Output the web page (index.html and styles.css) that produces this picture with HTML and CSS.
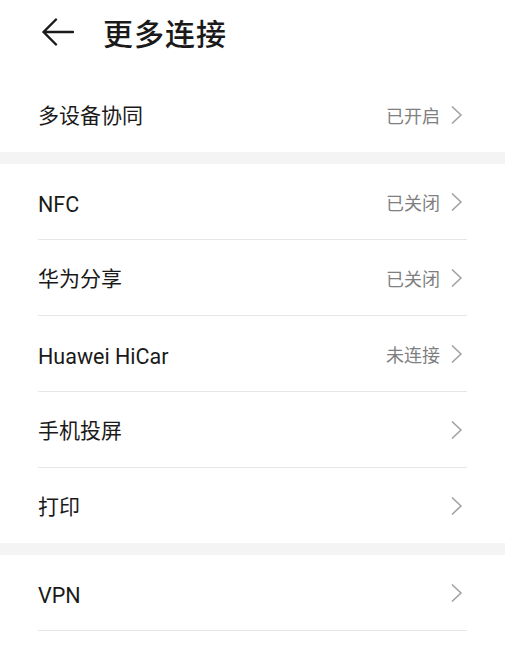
FILE: index.html
```html
<!DOCTYPE html>
<html lang="zh-CN">
<head>
<meta charset="utf-8">
<title>更多连接</title>
<link rel="stylesheet" href="styles.css">
</head>
<body>
<header class="topbar">
  <svg class="back" viewBox="0 0 32 28" width="32" height="28" aria-hidden="true">
    <path d="M31 14 H1.5 M14 1.5 L1.5 14 L14 26.5" fill="none" stroke="#1a1a1a" stroke-width="2.4" stroke-linecap="round" stroke-linejoin="round"/>
  </svg>
  <h1 class="title">更多连接</h1>
</header>

<section class="group">
  <div class="row"><div class="row-inner last">
    <span class="label">多设备协同</span>
    <span class="value">已开启</span>
    <svg class="chev" viewBox="0 0 12 18" width="12" height="18"><path d="M1.5 1 L10 9 L1.5 17" fill="none" stroke="#a3a3a3" stroke-width="1.7" stroke-linecap="round" stroke-linejoin="round"/></svg>
  </div></div>
</section>

<div class="band"></div>

<section class="group">
  <div class="row"><div class="row-inner">
    <span class="label latin">NFC</span>
    <span class="value">已关闭</span>
    <svg class="chev" viewBox="0 0 12 18" width="12" height="18"><path d="M1.5 1 L10 9 L1.5 17" fill="none" stroke="#a3a3a3" stroke-width="1.7" stroke-linecap="round" stroke-linejoin="round"/></svg>
  </div></div>
  <div class="row"><div class="row-inner">
    <span class="label">华为分享</span>
    <span class="value">已关闭</span>
    <svg class="chev" viewBox="0 0 12 18" width="12" height="18"><path d="M1.5 1 L10 9 L1.5 17" fill="none" stroke="#a3a3a3" stroke-width="1.7" stroke-linecap="round" stroke-linejoin="round"/></svg>
  </div></div>
  <div class="row"><div class="row-inner">
    <span class="label latin">Huawei HiCar</span>
    <span class="value">未连接</span>
    <svg class="chev" viewBox="0 0 12 18" width="12" height="18"><path d="M1.5 1 L10 9 L1.5 17" fill="none" stroke="#a3a3a3" stroke-width="1.7" stroke-linecap="round" stroke-linejoin="round"/></svg>
  </div></div>
  <div class="row"><div class="row-inner">
    <span class="label">手机投屏</span>
    <svg class="chev" viewBox="0 0 12 18" width="12" height="18"><path d="M1.5 1 L10 9 L1.5 17" fill="none" stroke="#a3a3a3" stroke-width="1.7" stroke-linecap="round" stroke-linejoin="round"/></svg>
  </div></div>
  <div class="row"><div class="row-inner last">
    <span class="label">打印</span>
    <svg class="chev" viewBox="0 0 12 18" width="12" height="18"><path d="M1.5 1 L10 9 L1.5 17" fill="none" stroke="#a3a3a3" stroke-width="1.7" stroke-linecap="round" stroke-linejoin="round"/></svg>
  </div></div>
</section>

<div class="band"></div>

<section class="group">
  <div class="row"><div class="row-inner">
    <span class="label latin">VPN</span>
    <svg class="chev" viewBox="0 0 12 18" width="12" height="18"><path d="M1.5 1 L10 9 L1.5 17" fill="none" stroke="#a3a3a3" stroke-width="1.7" stroke-linecap="round" stroke-linejoin="round"/></svg>
  </div></div>
</section>
</body>
</html>
```

FILE: styles.css
```css
html, body {
  margin: 0;
  padding: 0;
  background: #ffffff;
}

body {
  font-family: "Roboto", "Noto Sans CJK SC", "Noto Sans", sans-serif;
  color: #1a1a1a;
}

.topbar {
  height: 77px;
  display: flex;
  align-items: center;
  padding: 0 0 13px 42px;
  box-sizing: border-box;
}

.back {
  display: block;
  flex: none;
}

.title {
  margin: 0 0 0 29px;
  font-family: "Noto Sans CJK SC", sans-serif;
  font-size: 30px;
  font-weight: 500;
  line-height: 1;
  letter-spacing: 1px;
  color: #1a1a1a;
}

.group {
  background: #ffffff;
}

.row {
  padding: 0 38px;
}

.row-inner {
  height: 75px;
  display: flex;
  align-items: center;
  border-bottom: 1px solid #e6e6e6;
}

.row-inner.last {
  border-bottom: none;
}

.label {
  flex: 1;
  font-family: "Noto Sans CJK SC", sans-serif;
  font-size: 21px;
  line-height: 1;
  color: #1a1a1a;
}

.label.latin {
  font-family: "Roboto", "Noto Sans CJK SC", sans-serif;
  font-size: 21.5px;
  padding-top: 6px;
}

.value {
  font-family: "Noto Sans CJK SC", sans-serif;
  font-size: 18px;
  line-height: 1;
  color: #7f7f7f;
  margin-right: 11px;
}

.chev {
  display: block;
  flex: none;
  margin-right: 4px;
}

.band {
  height: 12px;
  background: #f4f4f4;
}
```
